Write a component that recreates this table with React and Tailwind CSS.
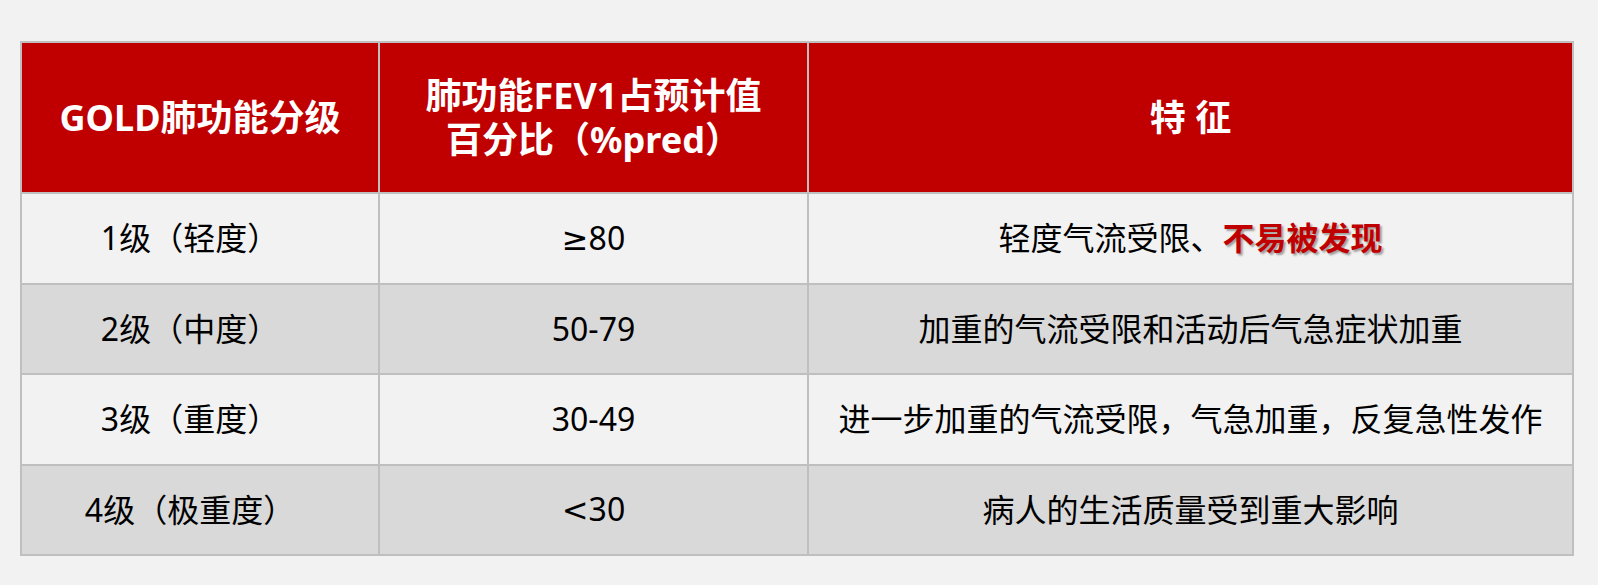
const sym = (s) => <span style={{ fontFamily: '"DejaVu Sans", sans-serif' }}>{s}</span>;

const rows = [
  { grade: '1级（轻度）', fev: <>{sym('≥')}80</>, desc: '轻度气流受限、', hint: '不易被发现', bg: 'bg-[#f2f2f2]' },
  { grade: '2级（中度）', fev: '50-79', desc: '加重的气流受限和活动后气急症状加重', bg: 'bg-[#d9d9d9]' },
  { grade: '3级（重度）', fev: '30-49', desc: '进一步加重的气流受限，气急加重，反复急性发作', bg: 'bg-[#f2f2f2]' },
  { grade: '4级（极重度）', fev: <>{sym('<')}30</>, desc: '病人的生活质量受到重大影响', bg: 'bg-[#d9d9d9]' },
];

export default function App() {
  return (
    <div
      className="min-h-screen w-full bg-[#f2f2f2] pt-[41px] pl-[20px] [text-spacing-trim:space-all]"
      style={{ fontFamily: '"Noto Sans", "Noto Sans CJK SC", sans-serif' }}
    >
      <table className="w-[1552px] border-collapse table-fixed">
        <colgroup>
          <col className="w-[358px]" />
          <col className="w-[429px]" />
          <col className="w-[765px]" />
        </colgroup>
        <thead>
          <tr className="h-[151px] bg-[#c00000] text-white font-bold text-[36px] leading-[44px]">
            <th className="border-2 border-[#bfbfbf] text-center align-middle font-bold">GOLD肺功能分级</th>
            <th className="border-2 border-[#bfbfbf] text-center align-middle font-bold">
              肺功能FEV1占预计值
              <br />
              百分比（%pred）
            </th>
            <th className="border-2 border-[#bfbfbf] text-center align-middle font-bold">特 征</th>
          </tr>
        </thead>
        <tbody>
          {rows.map((r) => (
            <tr key={r.grade} className={`h-[90.5px] ${r.bg} text-black text-[32px]`}>
              <td className="border-2 border-[#bfbfbf] text-center align-middle pr-[20px]">{r.grade}</td>
              <td className="border-2 border-[#bfbfbf] text-center align-middle">{r.fev}</td>
              <td className="border-2 border-[#bfbfbf] text-center align-middle">
                {r.desc}
                {r.hint && (
                  <span className="font-bold text-[#c00000] [text-shadow:2px_2px_2px_rgba(0,0,0,0.35)]">
                    {r.hint}
                  </span>
                )}
              </td>
            </tr>
          ))}
        </tbody>
      </table>
    </div>
  );
}
